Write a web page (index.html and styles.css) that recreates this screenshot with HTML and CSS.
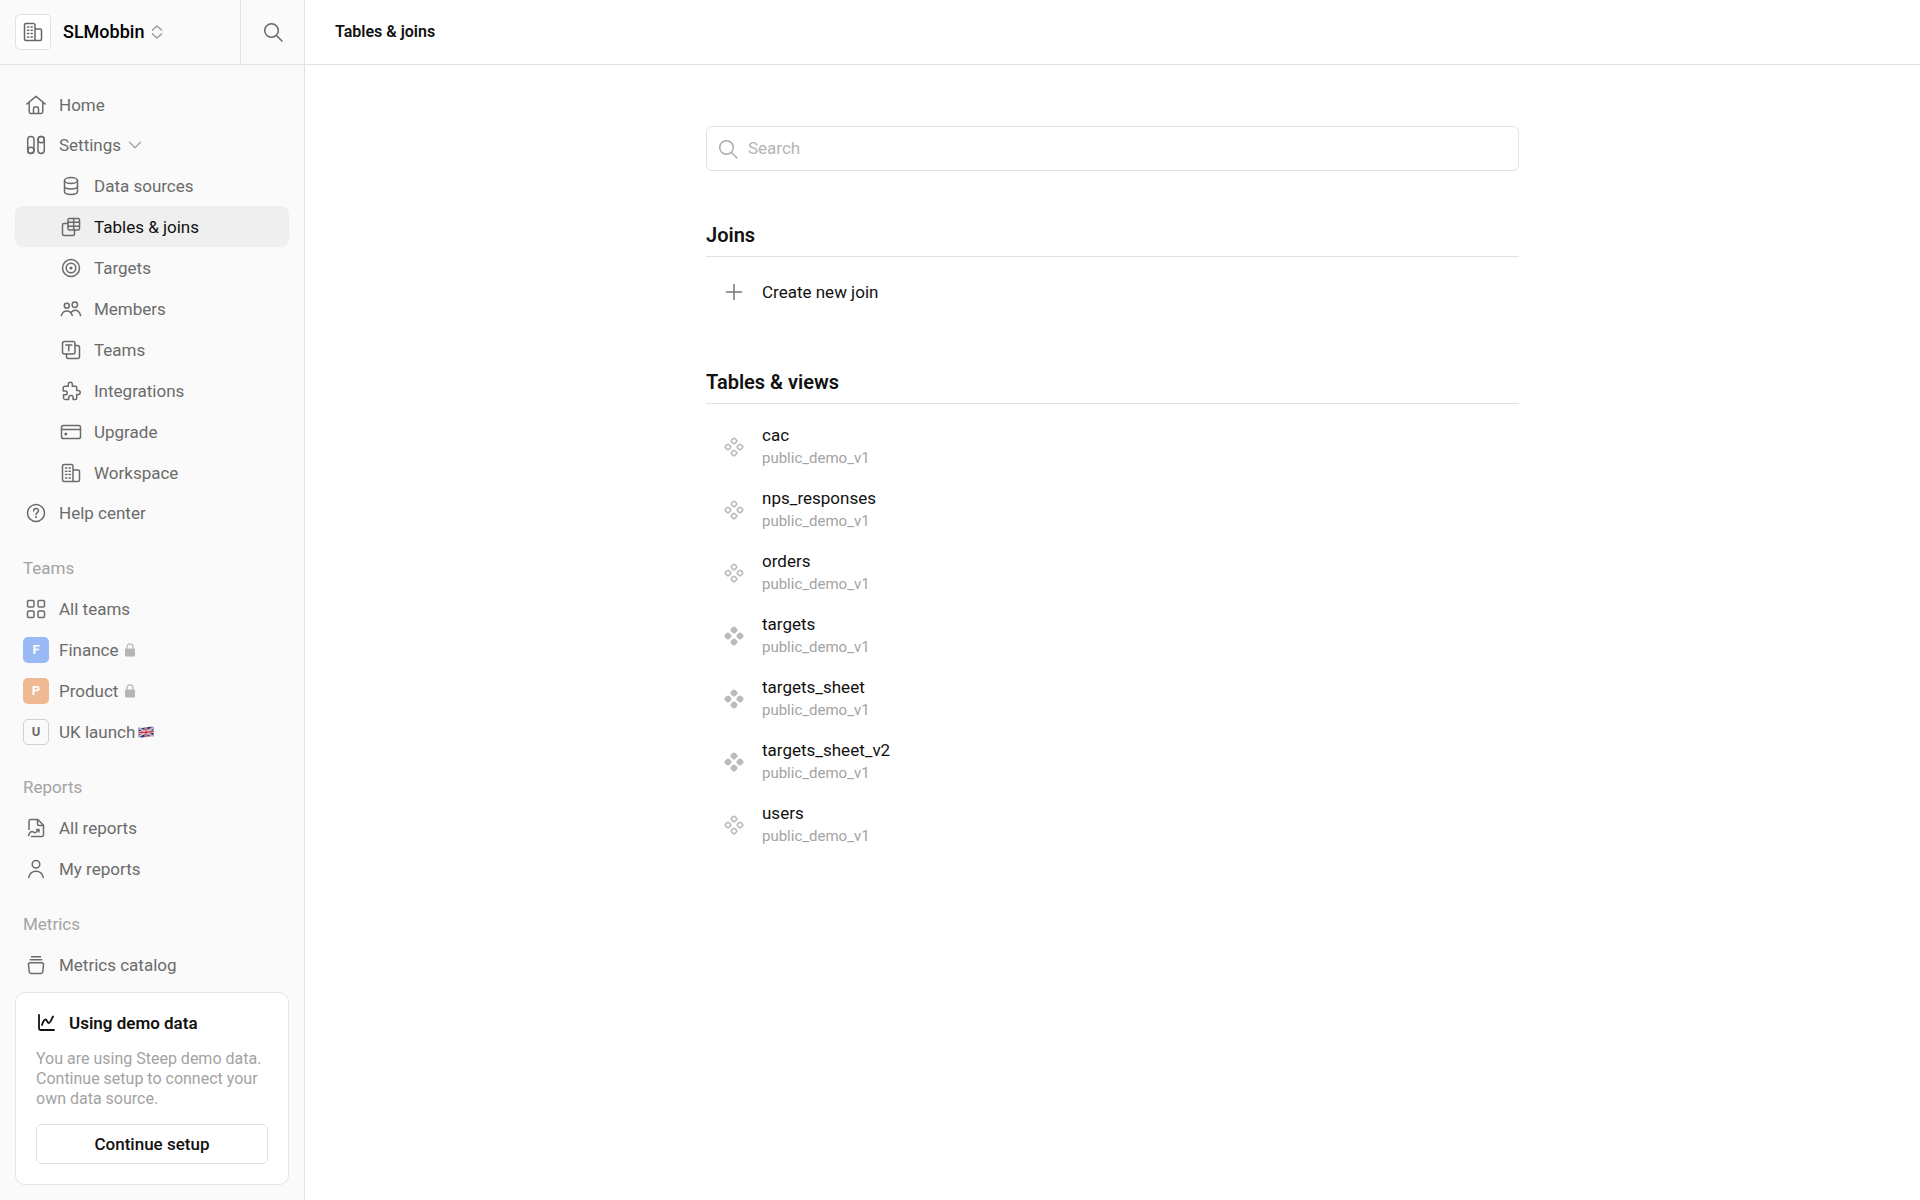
FILE: index.html
```html
<!DOCTYPE html>
<html lang="en">
<head>
  <meta charset="UTF-8" />
  <meta name="viewport" content="width=device-width, initial-scale=1.0"/>
  <title>Tables &amp; joins</title>
  <link rel="stylesheet" href="styles.css">
</head>
<body>

<!-- shared icons -->
<svg class="sprite" aria-hidden="true">
  <symbol id="building" viewBox="0 0 24 24">
    <path d="M5 3.500h7.500a1.500 1.500 0 0 1 1.500 1.500v15.500H5A1.500 1.500 0 0 1 3.500 19V5A1.500 1.500 0 0 1 5 3.500zM14 9h5a1.500 1.500 0 0 1 1.500 1.500V19a1.500 1.500 0 0 1-1.500 1.500h-5"/>
    <path d="M6.500 7h1.300M10 7h1.300M6.500 10.300h1.300M10 10.300h1.300M6.500 13.600h1.300M10 13.600h1.300M6.500 16.900h1.300M10 16.900h1.300"/>
  </symbol>
  <symbol id="search" viewBox="0 0 24 24">
    <circle cx="10.500" cy="10.500" r="6.800"/>
    <path d="M15.500 15.500l5.500 5.500"/>
  </symbol>
  <symbol id="lock" viewBox="0 0 12 14">
    <rect x="1" y="5.500" width="10" height="8" rx="1.200" fill="currentColor" stroke="none"/>
    <path d="M3 6V3.800a3 3 0 0 1 6 0V6" stroke-width="1.200"/>
  </symbol>
  <symbol id="cluster" viewBox="0 0 20 20">
    <rect x="-2.300" y="-2.300" width="4.600" height="4.600" rx="1.200" transform="translate(10 4) rotate(45)"/>
    <rect x="-2.300" y="-2.300" width="4.600" height="4.600" rx="1.200" transform="translate(4 10) rotate(45)"/>
    <rect x="-2.300" y="-2.300" width="4.600" height="4.600" rx="1.200" transform="translate(16 10) rotate(45)"/>
    <rect x="-2.300" y="-2.300" width="4.600" height="4.600" rx="1.200" transform="translate(10 16) rotate(45)"/>
  </symbol>
</svg>

<div class="app">
  <aside class="sidebar">
    <div class="sidebar-header">
      <button type="button" class="workspace">
        <span class="workspace-logo"><svg class="icon"><use href="#building"/></svg></span>
        SLMobbin
        <svg class="updown" viewBox="0 0 12 14"><path d="M1.500 5L6 1l4.500 4M1.500 9L6 13l4.500-4"/></svg>
      </button>
      <button type="button" class="search-btn" aria-label="Search">
        <svg class="icon"><use href="#search"/></svg>
      </button>
    </div>

    <nav class="nav">
      <ul class="nav-main">
        <li><a href="#" class="nav-item">
          <span class="slot"><svg class="icon" viewBox="0 0 24 24"><path d="M2.800 11L12 3.300l9.200 7.700M5.200 9.500v9.300a1.700 1.700 0 0 0 1.700 1.700h10.200a1.700 1.700 0 0 0 1.700-1.700V9.500M9.500 20.500v-5a1.500 1.500 0 0 1 1.500-1.500h2a1.500 1.500 0 0 1 1.500 1.500v5"/></svg></span>
          Home</a></li>
        <li>
          <button type="button" class="nav-item" aria-expanded="true">
            <span class="slot"><svg class="icon" viewBox="0 0 24 24"><rect x="3.700" y="3.500" width="6.300" height="17" rx="3.150"/><rect x="14" y="3.500" width="6.300" height="17" rx="3.150"/><circle cx="6.850" cy="17.300" r="3.100"/><circle cx="17.150" cy="6.700" r="3.100"/></svg></span>
            Settings
            <svg class="chevron" viewBox="0 0 14 8"><path d="M1.500 1.200L7 6.800l5.500-5.600"/></svg>
          </button>
          <ul class="nav-sub">
            <li><a href="#" class="nav-item">
              <span class="slot"><svg class="icon" viewBox="0 0 24 24"><ellipse cx="12" cy="6.500" rx="6.500" ry="3"/><path d="M5.500 6.500v11c0 1.700 2.900 3 6.500 3s6.500-1.300 6.500-3v-11M5.500 12c0 1.700 2.900 3 6.500 3s6.500-1.300 6.500-3"/></svg></span>
              Data sources</a></li>
            <li><a href="#" class="nav-item active" aria-current="page">
              <span class="slot"><svg class="icon" viewBox="0 0 24 24"><rect x="9" y="3.500" width="11.500" height="11.500" rx="1.500"/><path d="M9 7.300h11.500M9 11.200h11.500M14.700 3.500V15M9 8.500H5A1.500 1.500 0 0 0 3.500 10v9A1.500 1.500 0 0 0 5 20.500h9a1.500 1.500 0 0 0 1.500-1.500v-4"/></svg></span>
              Tables &amp; joins</a></li>
            <li><a href="#" class="nav-item">
              <span class="slot"><svg class="icon" viewBox="0 0 24 24"><circle cx="12" cy="12" r="8.500"/><circle cx="12" cy="12" r="4.800"/><circle class="dot" cx="12" cy="12" r="1.600"/></svg></span>
              Targets</a></li>
            <li><a href="#" class="nav-item">
              <span class="slot"><svg class="icon" viewBox="0 0 24 24"><circle cx="7.800" cy="8.700" r="2.500"/><circle cx="15.800" cy="7.700" r="2.700"/><path d="M2.300 18.500c.9-2.900 3-4.600 5.500-4.600s4.600 1.700 5.500 4.600M12.500 15c1-1.200 2.200-1.800 3.600-1.800 2.500 0 4.600 1.800 5.500 5.300"/></svg></span>
              Members</a></li>
            <li><a href="#" class="nav-item">
              <span class="slot"><svg class="icon" viewBox="0 0 24 24"><rect x="3.500" y="3.500" width="12.500" height="12.500" rx="2"/><path d="M6.800 7h6M9.800 7v5.700M16 7.500h2.500a2 2 0 0 1 2 2v9a2 2 0 0 1-2 2h-9a2 2 0 0 1-2-2V16"/></svg></span>
              Teams</a></li>
            <li><a href="#" class="nav-item">
              <span class="slot"><svg class="icon" viewBox="0 0 24 24"><path d="M9.300 7.200V5.300a2 2 0 0 1 4 0v1.900h3.200a1.200 1.200 0 0 1 1.200 1.200v3.100h1.500a2 2 0 0 1 0 4h-1.500v3.800a1.200 1.200 0 0 1-1.200 1.200h-2.400v-1.800a2 2 0 0 0-4.400 0v1.800H6.200A1.700 1.700 0 0 1 4.500 19v-3.200h1.800a1.900 1.900 0 0 0 0-3.800H4.200V9a1.800 1.800 0 0 1 1.800-1.800z"/></svg></span>
              Integrations</a></li>
            <li><a href="#" class="nav-item">
              <span class="slot"><svg class="icon" viewBox="0 0 24 24"><rect x="2.500" y="5.500" width="19" height="13" rx="1.800"/><path d="M2.500 9.500h19"/><circle class="dot" cx="6.800" cy="14" r="1.500"/></svg></span>
              Upgrade</a></li>
            <li><a href="#" class="nav-item">
              <span class="slot"><svg class="icon"><use href="#building"/></svg></span>
              Workspace</a></li>
          </ul>
        </li>
        <li><a href="#" class="nav-item">
          <span class="slot"><svg class="icon" viewBox="0 0 24 24"><circle cx="12" cy="12" r="8.500"/><path d="M9.600 9.900c0-1.400 1-2.300 2.400-2.300s2.500.9 2.500 2.200c0 1.800-2.500 1.900-2.500 3.700"/><circle class="dot" cx="12" cy="16" r="1.100"/></svg></span>
          Help center</a></li>
      </ul>

      <h2 class="nav-title">Teams</h2>
      <ul>
        <li><a href="#" class="nav-item">
          <span class="slot"><svg class="icon" viewBox="0 0 24 24"><rect x="3.500" y="3.500" width="6.500" height="6.500" rx="1.300"/><rect x="14" y="3.500" width="6.500" height="6.500" rx="1.300"/><rect x="3.500" y="14" width="6.500" height="6.500" rx="1.300"/><rect x="14" y="14" width="6.500" height="6.500" rx="1.300"/></svg></span>
          All teams</a></li>
        <li><a href="#" class="nav-item">
          <span class="slot badge blue">F</span>
          Finance
          <svg class="lock"><use href="#lock"/></svg></a></li>
        <li><a href="#" class="nav-item">
          <span class="slot badge orange">P</span>
          Product
          <svg class="lock"><use href="#lock"/></svg></a></li>
        <li><a href="#" class="nav-item">
          <span class="slot badge outline">U</span>
          UK launch
          <svg class="flag" viewBox="0 0 16 12">
            <path d="M.5 1.500C5 3 10 0 15.500 1v9.500C10 9.500 5 12.500.500 11z" fill="#2b3a78" stroke="none"/>
            <path d="M1.500 2.500l13 7.500M14.500 2L1.500 10" stroke="#fff" stroke-width="1.600"/>
            <path d="M1.500 2.500l13 7.500M14.500 2L1.500 10" stroke="#c8313e" stroke-width=".6"/>
            <path d="M8 2v8.500M1.500 6.600c5 .7 9-1.200 13-.8" stroke="#fff" stroke-width="2.600"/>
            <path d="M8 1.800v9M1 6.600c5 .7 9-1.200 14-.8" stroke="#c8313e" stroke-width="1.400"/>
          </svg></a></li>
      </ul>

      <h2 class="nav-title">Reports</h2>
      <ul>
        <li><a href="#" class="nav-item">
          <span class="slot"><svg class="icon" viewBox="0 0 24 24"><path d="M5 13.500V5a1.500 1.500 0 0 1 1.500-1.500h7.300l5.700 5.700V19a1.500 1.500 0 0 1-1.500 1.500H7.500M13.500 3.800v4.200a1.500 1.500 0 0 0 1.500 1.500h4.200M4.500 19.500c.8-2.300 2-4 3.600-4s1.600 1.300 2.900 1.300 1.800-2 3.800-3M12.500 13.500h2.500V16"/></svg></span>
          All reports</a></li>
        <li><a href="#" class="nav-item">
          <span class="slot"><svg class="icon" viewBox="0 0 24 24"><circle cx="12" cy="7.300" r="3.800"/><path d="M4.700 20.500c.9-4 3.700-6.300 7.300-6.300s6.400 2.300 7.300 6.300"/></svg></span>
          My reports</a></li>
      </ul>

      <h2 class="nav-title">Metrics</h2>
      <ul>
        <li><a href="#" class="nav-item">
          <span class="slot"><svg class="icon" viewBox="0 0 24 24"><path d="M7.500 3.700h9M6.300 6.700h11.400M6 9.800h12a1.500 1.500 0 0 1 1.500 1.700l-.7 7.200a2 2 0 0 1-2 1.800H7.200a2 2 0 0 1-2-1.800l-.7-7.200A1.500 1.500 0 0 1 6 9.800z"/></svg></span>
          Metrics catalog</a></li>
      </ul>
    </nav>

    <section class="demo-card">
      <h2><svg class="chart" viewBox="0 0 20 20"><path d="M3 2v13.500A1.500 1.500 0 0 0 4.500 17H18M6 12c1.200-4 2.300-5.500 3.500-5.500 1.600 0 1.800 3.500 3.300 3.500s2.700-3.500 4.200-6.500"/></svg>Using demo data</h2>
      <p>You are using Steep demo data. Continue setup to connect your own data source.</p>
      <button type="button">Continue setup</button>
    </section>
  </aside>

  <main class="main">
    <header class="topbar"><h1>Tables &amp; joins</h1></header>

    <div class="content">
      <label class="search-field">
        <svg class="icon"><use href="#search"/></svg>
        <input type="search" placeholder="Search" aria-label="Search">
      </label>

      <section class="joins">
        <h2>Joins</h2>
        <button type="button" class="create">
          <svg class="plus" viewBox="0 0 20 20"><path d="M10 2.500v15M2.500 10h15"/></svg>
          Create new join
        </button>
      </section>

      <section class="tables">
        <h2>Tables &amp; views</h2>
        <ul>
          <li><a href="#" class="table-row">
            <svg class="cluster"><use href="#cluster"/></svg>
            <span class="table-text"><span class="table-name">cac</span><span class="table-schema">public_demo_v1</span></span></a></li>
          <li><a href="#" class="table-row">
            <svg class="cluster"><use href="#cluster"/></svg>
            <span class="table-text"><span class="table-name">nps_responses</span><span class="table-schema">public_demo_v1</span></span></a></li>
          <li><a href="#" class="table-row">
            <svg class="cluster"><use href="#cluster"/></svg>
            <span class="table-text"><span class="table-name">orders</span><span class="table-schema">public_demo_v1</span></span></a></li>
          <li><a href="#" class="table-row">
            <svg class="cluster filled"><use href="#cluster"/></svg>
            <span class="table-text"><span class="table-name">targets</span><span class="table-schema">public_demo_v1</span></span></a></li>
          <li><a href="#" class="table-row">
            <svg class="cluster filled"><use href="#cluster"/></svg>
            <span class="table-text"><span class="table-name">targets_sheet</span><span class="table-schema">public_demo_v1</span></span></a></li>
          <li><a href="#" class="table-row">
            <svg class="cluster filled"><use href="#cluster"/></svg>
            <span class="table-text"><span class="table-name">targets_sheet_v2</span><span class="table-schema">public_demo_v1</span></span></a></li>
          <li><a href="#" class="table-row">
            <svg class="cluster"><use href="#cluster"/></svg>
            <span class="table-text"><span class="table-name">users</span><span class="table-schema">public_demo_v1</span></span></a></li>
        </ul>
      </section>
    </div>
  </main>
</div>

</body>
</html>
```
FILE: styles.css
```css
* {
  box-sizing: border-box;
}

body {
  margin: 0;
  font-family: Roboto, "Liberation Sans", sans-serif;
  font-size: 17px;
  line-height: 20px;
  color: #111;
  background-color: #fff;
}

h1, h2, p, ul {
  margin: 0;
  padding: 0;
}

ul {
  list-style: none;
}

a {
  color: inherit;
  text-decoration: none;
}

button {
  font: inherit;
  color: inherit;
  background: none;
  border: none;
  padding: 0;
  cursor: pointer;
}

svg {
  fill: none;
  stroke: currentColor;
  stroke-width: 1.5;
  stroke-linecap: round;
  stroke-linejoin: round;
  flex-shrink: 0;
}

.sprite {
  display: none;
}

.icon {
  width: 24px;
  height: 24px;
}

.dot {
  fill: currentColor;
  stroke: none;
}

.app {
  display: flex;
  height: 100vh;
}

/* Sidebar */
.sidebar {
  width: 305px;
  flex-shrink: 0;
  display: flex;
  flex-direction: column;
  background-color: #fafafa;
  border-right: 1px solid #e2e2e2;
}

.sidebar-header {
  display: flex;
  height: 65px;
  flex-shrink: 0;
  border-bottom: 1px solid #e2e2e2;
}

.workspace {
  flex: 1;
  display: flex;
  align-items: center;
  padding-left: 15px;
  font-size: 18px;
  font-weight: 500;
  color: #000;
}

.workspace-logo {
  display: flex;
  align-items: center;
  justify-content: center;
  width: 36px;
  height: 36px;
  margin-right: 12px;
  background-color: #fff;
  border: 1px solid #e2e2e2;
  border-radius: 5px;
  color: #666;
}

.updown {
  width: 12px;
  height: 14px;
  margin-left: 7px;
  color: #999;
}

.search-btn {
  width: 64px;
  display: flex;
  align-items: center;
  justify-content: center;
  border-left: 1px solid #e2e2e2;
  color: #666;
}

.nav {
  flex: 1;
  min-height: 0;
  overflow: hidden;
  padding: 20px 15px 0;
  color: #6b6b6b;
}

.nav-item {
  display: flex;
  align-items: center;
  width: 100%;
  height: 41px;
  padding-left: 8px;
  border-radius: 8px;
}

.nav-main > li > .nav-item {
  height: 40px;
}

.nav-sub .nav-item {
  padding-left: 43px;
}

.nav-item.active {
  background-color: #efefef;
  color: #111;
}

.nav-item.active .icon {
  color: #6b6b6b;
}

.slot {
  display: flex;
  align-items: center;
  justify-content: center;
  width: 26px;
  height: 26px;
  margin-right: 10px;
}

.chevron {
  width: 14px;
  height: 8px;
  margin-left: 7px;
  color: #aaa;
}

.nav-title {
  height: 40px;
  margin-top: 15px;
  padding-left: 8px;
  font-size: 17px;
  font-weight: 400;
  line-height: 40px;
  color: #a3a3a3;
}

.badge {
  border-radius: 5px;
  font-size: 13px;
  font-weight: 700;
  color: #fff;
}

.blue {
  background-color: #9bb9f6;
}

.orange {
  background-color: #efba93;
}

.outline {
  border: 1px solid #d2d2d2;
  color: #6b6b6b;
}

.lock {
  width: 12px;
  height: 14px;
  margin-left: 6px;
  color: #b5b5b5;
}

.flag {
  width: 16px;
  height: 12px;
  margin-left: 3px;
}

.demo-card {
  margin: 0 15px 15px;
  padding: 20px;
  background-color: #fff;
  border: 1px solid #e4e4e4;
  border-radius: 10px;
}

.demo-card h2 {
  display: flex;
  align-items: center;
  gap: 13px;
  font-size: 17px;
  font-weight: 600;
}

.chart {
  width: 20px;
  height: 20px;
  stroke-width: 1.8;
}

.demo-card p {
  margin: 16px 0 15px;
  font-size: 16px;
  color: #a3a3a3;
}

.demo-card button {
  width: 100%;
  height: 40px;
  border: 1px solid #e2e2e2;
  border-radius: 6px;
  font-weight: 500;
}

/* Main */
.main {
  flex: 1;
  min-width: 0;
}

.topbar {
  display: flex;
  align-items: center;
  height: 65px;
  padding-left: 30px;
  border-bottom: 1px solid #e2e2e2;
}

.topbar h1 {
  font-size: 16px;
  font-weight: 600;
}

.content {
  max-width: 853px;
  margin: 0 auto;
  padding: 61px 20px 0;
}

.search-field {
  display: flex;
  align-items: center;
  height: 45px;
  padding-left: 9px;
  border: 1px solid #e2e2e2;
  border-radius: 6px;
  color: #aaa;
}

.search-field input {
  flex: 1;
  padding: 0 8px 2px;
  border: none;
  outline: none;
  background: none;
  font: inherit;
  color: #111;
}

.search-field input::placeholder {
  color: #b5b5b5;
}

.content h2 {
  padding-bottom: 9px;
  border-bottom: 1px solid #e2e2e2;
  font-size: 20px;
  font-weight: 600;
  line-height: 24px;
}

.joins {
  margin-top: 52px;
}

.create {
  display: flex;
  align-items: center;
  width: 100%;
  height: 40px;
  margin-top: 15px;
  padding-left: 18px;
}

.plus, .cluster {
  width: 20px;
  height: 20px;
  margin-right: 18px;
}

.plus {
  color: #777;
}

.tables {
  margin-top: 58px;
}

.tables ul {
  margin-top: 11px;
}

.table-row {
  display: flex;
  align-items: center;
  height: 63px;
  padding-left: 18px;
}

.cluster {
  color: #bbb;
}

.filled {
  fill: #bbb;
}

.table-text {
  display: flex;
  flex-direction: column;
  gap: 1px;
}

.table-name {
  line-height: 22px;
}

.table-schema {
  font-size: 15px;
  line-height: 22px;
  color: #a3a3a3;
}
```
